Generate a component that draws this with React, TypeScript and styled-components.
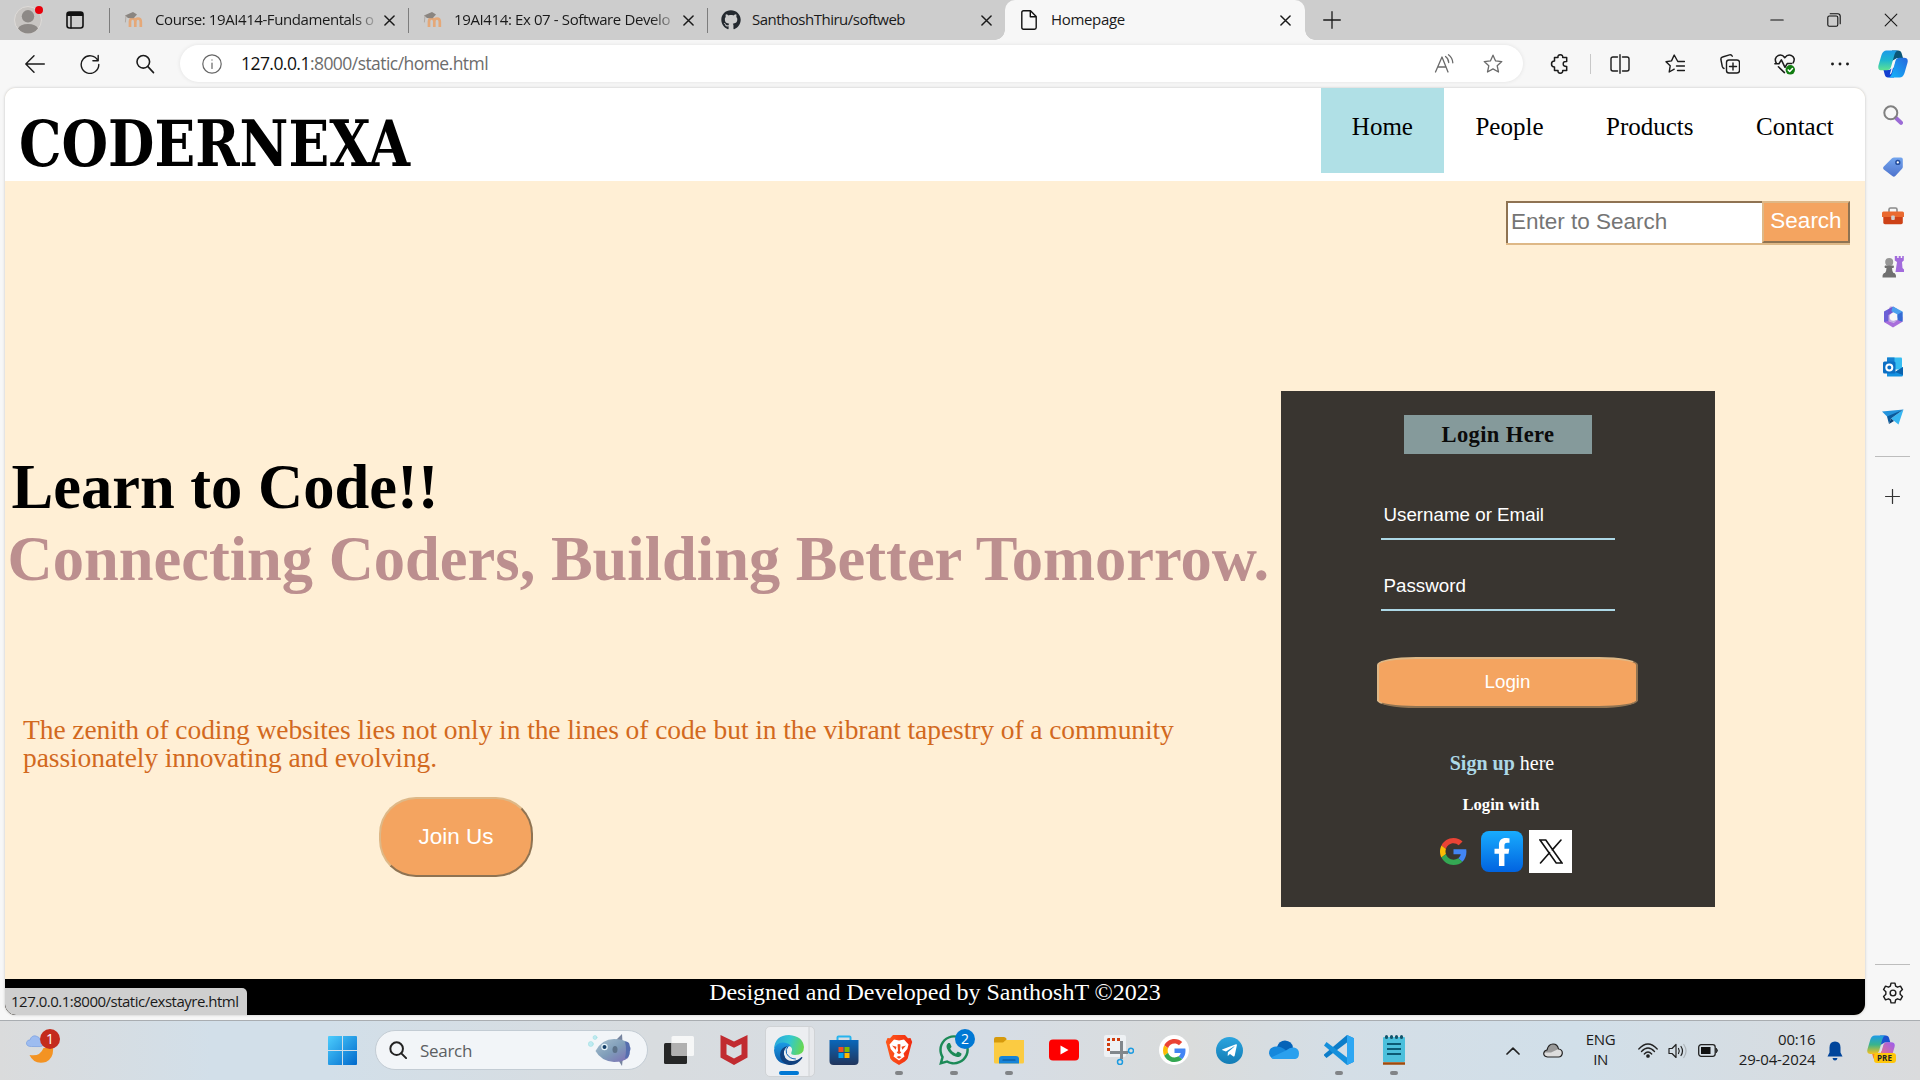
import React from "react";
import styled, { createGlobalStyle, css } from "styled-components";
import { FaGithub, FaWhatsapp, FaTelegramPlane, FaFacebookF } from "react-icons/fa";

const ui = `"Open Sans", "Noto Sans", sans-serif`;
const serif = `"Liberation Serif", "Times New Roman", serif`;
const sans = `"Liberation Sans", Arial, sans-serif`;

const GlobalStyle = createGlobalStyle`
  * { box-sizing: border-box; }
  body { margin: 0; background: #f7f7f7; overflow: hidden; }
`;

/* ---------- shared pieces ---------- */

const Screen = styled.div`
  width: 1920px;
  height: 1080px;
  display: flex;
  flex-direction: column;
  font-family: ${ui};
  color: #1a1a1a;
  overflow: hidden;
`;

const Icon = styled.svg<{ $w: number; $h?: number; $ml?: number }>`
  display: block;
  flex: none;
  width: ${(p) => p.$w}px;
  height: ${(p) => p.$h ?? p.$w}px;
  margin-left: ${(p) => p.$ml ?? 0}px;
  fill: none;
  stroke-linecap: round;
  stroke-linejoin: round;
`;

type LineProps = {
  w?: number;
  ml?: number;
  color?: string;
  sw?: number;
  children: React.ReactNode;
};

const Line = ({ w = 20, ml = 0, color = "#1b1b1b", sw = 1.4, children }: LineProps) => (
  <Icon viewBox="0 0 20 20" $w={w} $ml={ml} stroke={color} strokeWidth={sw}>
    {children}
  </Icon>
);

const GoogleMark = ({ size }: { size: number }) => (
  <Icon viewBox="0 0 48 48" $w={size}>
    <path fill="#ea4335" d="M24 9.500c3.540 0 6.710 1.220 9.210 3.600l6.850-6.850C35.900 2.380 30.470 0 24 0 14.620 0 6.510 5.380 2.560 13.220l7.980 6.190C12.430 13.720 17.740 9.500 24 9.500z" />
    <path fill="#4285f4" d="M46.980 24.550c0-1.570-.150-3.090-.380-4.550H24v9.020h12.940c-.580 2.960-2.260 5.480-4.780 7.180l7.730 6c4.510-4.180 7.090-10.360 7.090-17.650z" />
    <path fill="#fbbc05" d="M10.530 28.590c-.480-1.450-.760-2.990-.760-4.590s.270-3.140.760-4.590l-7.980-6.190C.920 16.460 0 20.120 0 24c0 3.880.920 7.540 2.560 10.780l7.970-6.190z" />
    <path fill="#34a853" d="M24 48c6.480 0 11.930-2.130 15.890-5.810l-7.730-6c-2.150 1.450-4.920 2.300-8.160 2.300-6.260 0-11.570-4.220-13.470-9.910l-7.980 6.190C6.510 42.620 14.620 48 24 48z" />
  </Icon>
);

/* ---------- tab strip ---------- */

const TabStrip = styled.div`
  height: 40px;
  flex: none;
  display: flex;
  align-items: center;
  background: #cdcdcd;
`;

const Avatar = styled.div`
  position: relative;
  width: 28px;
  height: 28px;
  margin-left: 14px;
`;

const AvatarDot = styled.i`
  position: absolute;
  top: 0;
  right: -1px;
  width: 8px;
  height: 8px;
  border-radius: 50%;
  background: #e8000b;
`;

const TabBox = styled.div<{ $active?: boolean; $first?: boolean; $w: number }>`
  width: ${(p) => p.$w}px;
  height: 40px;
  margin-left: ${(p) => (p.$first ? 25 : 0)}px;
  display: flex;
  align-items: center;
  ${(p) =>
    p.$active
      ? css`
          position: relative;
          background: #f7f7f7;
          border-radius: 10px 10px 0 0;
          &::before,
          &::after {
            content: "";
            position: absolute;
            bottom: 0;
            width: 10px;
            height: 10px;
          }
          &::before {
            left: -10px;
            background: radial-gradient(circle at 0 0, #cdcdcd 9.5px, #f7f7f7 10px);
          }
          &::after {
            right: -10px;
            background: radial-gradient(circle at 100% 0, #cdcdcd 9.5px, #f7f7f7 10px);
          }
        `
      : ""}
`;

const TabRule = styled.span`
  width: 1px;
  height: 25px;
  background: #7d7d7d;
`;

const Favicon = styled.span<{ $ml?: number }>`
  width: 20px;
  height: 20px;
  margin-left: ${(p) => p.$ml ?? 15}px;
  display: flex;
  align-items: center;
  justify-content: center;
  color: #24292f;
`;

const TabTitle = styled.span<{ $fade?: boolean; $ls?: number; $ml?: number }>`
  width: 219px;
  margin-left: ${(p) => p.$ml ?? 10}px;
  padding-bottom: 2px;
  white-space: nowrap;
  font-size: 15px;
  line-height: 20px;
  color: #1a1a1a;
  letter-spacing: ${(p) => p.$ls ?? 0}px;
  ${(p) => (p.$fade ? "mask-image: linear-gradient(90deg, #000 90%, transparent 103%);" : "")}
`;

const WindowButtons = styled.div`
  margin-left: auto;
  display: flex;
  align-items: center;
  gap: 43px;
  padding: 0 22px 1px 0;
`;

const Moodle = () => (
  <Icon viewBox="0 0 20 18" $w={20} $h={18}>
    <path d="M6 16V10.500Q6 7.500 8.600 7.500T11.300 10.500V16M11.300 10.500Q11.300 7.500 14 7.500T16.800 10.500V16" stroke="#e5a878" strokeWidth="2.700" strokeLinecap="butt" />
    <path d="M1 4.500L9 1l4 2.500-3.500 3.800L4 7z" fill="#8a8580" />
    <path d="M2 5l-.6 6" stroke="#a8a098" strokeWidth=".8" />
  </Icon>
);

const Cross = ({ size = 11, ml = 0, sw = 1.6 }) => (
  <Icon viewBox="0 0 12 12" $w={size} $ml={ml} stroke="#1a1a1a" strokeWidth={sw}>
    <path d="M1 1l10 10M11 1L1 11" />
  </Icon>
);

const Tabs = () => (
  <TabStrip>
    <Avatar>
      <Icon viewBox="0 0 28 28" $w={28}>
        <circle cx="14" cy="14" r="13.500" fill="#c8c5c2" stroke="#dedbd8" />
        <circle cx="14" cy="10.300" r="6.200" fill="#8d8986" />
        <path d="M4 22.500Q6 18 14 18T24 22.500Q20 27.600 14 27.600T4 22.500z" fill="#8d8986" />
      </Icon>
      <AvatarDot />
    </Avatar>
    <Icon viewBox="0 0 18 18" $w={18} $ml={24}>
      <rect x="1" y="1" width="16" height="16" rx="2.500" stroke="#111" strokeWidth="1.600" />
      <path d="M1 3.200Q1 1 3.200 1H15Q17 1 17 3.200V5H1z" fill="#111" />
      <path d="M5 5v12" stroke="#111" strokeWidth="1.400" />
    </Icon>
    <TabBox $w={299} $first>
      <TabRule />
      <Favicon $ml={14}><Moodle /></Favicon>
      <TabTitle $fade $ls={-0.42} $ml={11}>Course: 19AI414-Fundamentals o</TabTitle>
      <Cross ml={10} />
    </TabBox>
    <TabBox $w={299}>
      <TabRule />
      <Favicon $ml={14}><Moodle /></Favicon>
      <TabTitle $fade $ls={-0.38} $ml={11}>19AI414: Ex 07 - Software Develo</TabTitle>
      <Cross ml={10} />
    </TabBox>
    <TabBox $w={298}>
      <TabRule />
      <Favicon $ml={13}><FaGithub size={20} /></Favicon>
      <TabTitle $ls={-0.5} $ml={11}>SanthoshThiru/softweb</TabTitle>
      <Cross ml={10} />
    </TabBox>
    <TabBox $active $w={300}>
      <Favicon $ml={14}>
        <Icon viewBox="0 0 16 20" $w={16} $h={20} stroke="#111" strokeWidth="1.400">
          <path d="M2.500.8H9.500L15.200 6.600V17.500Q15.200 19.200 13.500 19.200H2.500Q.8 19.200.8 17.500V2.500Q.8.8 2.500.8zM9.300 1V6.800H15" />
        </Icon>
      </Favicon>
      <TabTitle $ls={-0.33} $ml={12}>Homepage</TabTitle>
      <Cross ml={10} />
    </TabBox>
    <Icon viewBox="0 0 18 18" $w={18} $ml={18} stroke="#1a1a1a" strokeWidth="1.300">
      <path d="M9 .7v16.600M.7 9h16.600" />
    </Icon>
    <WindowButtons>
      <Icon viewBox="0 0 14 14" $w={14} stroke="#111" strokeWidth="1.100"><path d="M.8 7h12.400" /></Icon>
      <Icon viewBox="0 0 14 14" $w={14} stroke="#111" strokeWidth="1.100">
        <rect x=".8" y="3" width="10" height="10.200" rx="1.500" />
        <path d="M3.200.8h7.500q2.500 0 2.500 2.500v7.500" />
      </Icon>
      <Cross size={14} sw={0.95} />
    </WindowButtons>
  </TabStrip>
);

/* ---------- address bar ---------- */

const Toolbar = styled.div`
  height: 47px;
  flex: none;
  display: flex;
  align-items: center;
  background: #f7f7f7;
`;

const AddressBar = styled.div`
  width: 1343px;
  height: 37px;
  margin-left: 25px;
  padding-right: 20px;
  display: flex;
  align-items: center;
  border-radius: 19px;
  background: #fff;
  box-shadow: 0 0 4px rgba(0, 0, 0, 0.09);
`;

const Url = styled.span`
  flex: 1;
  margin-left: 19px;
  padding-bottom: 1px;
  font-size: 17.5px;
  line-height: 24px;
  color: #6c6c6c;
  letter-spacing: -0.55px;
  b {
    font-weight: 400;
    color: #111;
  }
`;

const ToolRule = styled.span`
  width: 1px;
  height: 20px;
  margin-left: 20px;
  background: #c8c8c8;
`;

const starPath = "M10 1.200l2.600 5.700 6.200.7-4.600 4.200 1.300 6.200L10 14.900 4.500 18l1.300-6.200L1.200 7.600l6.200-.7z";

const Copilot = ({ w = 30, ml = 0, warm = false }) => (
  <Icon viewBox="0 0 30 28" $w={w} $h={(w * 28) / 30} $ml={ml}>
    <defs>
      <linearGradient id={`cpA${warm}`} x1="0" y1="0" x2="0" y2="1">
        <stop stopColor="#1d9ae8" />
        <stop offset=".5" stopColor={warm ? "#39b48c" : "#1fb7cf"} />
        <stop offset="1" stopColor={warm ? "#f8c21a" : "#5fe391"} />
      </linearGradient>
      <linearGradient id={`cpB${warm}`} x1="1" y1="0" x2="0" y2="1">
        <stop stopColor={warm ? "#9a5cf0" : "#2767dc"} />
        <stop offset="1" stopColor={warm ? "#ff7a6c" : "#12b7fb"} />
      </linearGradient>
    </defs>
    <path d="M14 .500h6q3 0 3.700 3L25 8h-6l-5 3z" fill={warm ? "#1b52cf" : "#0b5677"} />
    <path d="M16 27.500h-6q-2.600 0-3.300-3L5.500 20h5.500l6-3z" fill={warm ? "#f8822b" : "#123fd0"} />
    <path d="M8.500.500H20q-2.500.400-3.500 4l-3.500 12.500q-1 3.300-4 3.300H4q-4.700 0-3.500-5L3.500 5Q5 .500 8.500.500z" fill={`url(#cpA${warm})`} />
    <path d="M21.500 27.500H11q2-.500 3-4l3.400-12.500q1-3.200 4-3.200H26q4.700 0 3.500 5L26.500 23q-1.500 4.500-5 4.500z" fill={`url(#cpB${warm})`} />
    <path d="M17.500 9l-3.800 13.500q-.7 2-1.900 2L14 16.500z" fill={warm ? "#e4e6ee" : "#f7f7f7"} />
  </Icon>
);

const AddressRow = () => (
  <Toolbar>
    <Line ml={25}><path d="M.8 10h18.500M9 1.700L.8 10 9 18.300" /></Line>
    <Line ml={35}><path d="M17.800 6.500A8.800 8.800 0 1 0 18.800 10.500M18.200 1.500v5.300h-5.300" /></Line>
    <Line ml={35} sw={1.6}><circle cx="8.300" cy="7.800" r="6.300" /><path d="M12.900 12.600L18.500 18.600" /></Line>
    <AddressBar>
      <Line ml={22} color="#666" sw={1.2}>
        <circle cx="10" cy="10" r="9.200" /><path d="M10 9v5.500M10 5.900v.2" />
      </Line>
      <Url><b>127.0.0.1</b>:8000/static/home.html</Url>
      <Line color="#6a6a6a" sw={1.3}>
        <path d="M1.500 18L8 3l6 15M3.700 13h8.400M11.500 2.500q3 2 3.200 6M14.500.8q4 3 4.300 8" />
      </Line>
      <Line ml={29} color="#6a6a6a" sw={1.3}><path d={starPath} /></Line>
    </AddressBar>
    <Line ml={27} sw={1.5}>
      <path d="M4.500 3.500H8Q7.500.8 10.300.8T12.700 3.500h4v4q-3.500-.3-3.500 2.400t3.500 2.600v4h-4q.2 2.700-2.400 2.700T8 16.500H4.500V13Q1.500 13 1.500 10T4.500 7z" />
    </Line>
    <ToolRule />
    <Line ml={19}>
      <path d="M7.500 3H3Q1 3 1 5v10q0 2 2 2h4.500M12.500 3H17q2 0 2 2v10q0 2-2 2h-4.500M10 .8v18.400" />
    </Line>
    <Line ml={35}>
      <path d="M12.500 7L9.200 1 6.500 6.900 1 7.700l4.200 4.100L4.200 18l5-2.800M12.800 7.500h6.700M11.500 12h8M12.500 16.500h7" />
    </Line>
    <Line ml={35}>
      <rect x="6.500" y="6" width="13" height="13" rx="2.500" /><path d="M13 9v7M9.500 12.500h7M4 14.500Q2.700 14 2.300 12.500L.9 5.500Q.6 3.500 2.500 3L9.500.9q2-.4 2.800 1.300" />
    </Line>
    <Line ml={34} w={22}>
      <path d="M2.200 9.500Q-.5 4.500 4 2.200 7.500 1 9.800 4.300 12.300 1 15.600 2.200 20 4.500 17.400 9M.8 9.800h3.700L6.700 6.300 10 13l2-3.400h4M4 12.500l5.500 5.300" />
      <circle cx="14.800" cy="15.300" r="4.300" fill="#107c10" stroke="none" />
      <path d="M12.900 15.400l1.400 1.400 2.500-2.700" stroke="#fff" />
    </Line>
    <Line ml={34} sw={2.9}><path d="M2.500 10h.01M10 10h.01M17.500 10h.01" /></Line>
    <Copilot ml={28} />
  </Toolbar>
);

/* ---------- edge sidebar ---------- */

const Rail = styled.aside`
  width: 54px;
  padding-right: 1px;
  display: flex;
  flex-direction: column;
  align-items: center;
`;

const RailCell = styled.div<{ $h?: number }>`
  height: ${(p) => p.$h ?? 50}px;
  flex: none;
  display: flex;
  align-items: center;
`;

const RailRule = styled.hr<{ $mt?: string }>`
  width: 35px;
  height: 1px;
  border: 0;
  margin: ${(p) => p.$mt ?? "0"} 0 0;
  flex: none;
  background: #bdbdbd;
`;

const Sidebar = () => (
  <Rail>
    <RailCell $h={56}>
      <Icon viewBox="0 0 20 20" $w={20}>
        <path d="M13 13l5 4.800" stroke="#9b6bd6" strokeWidth="4" />
        <circle cx="7.800" cy="7.800" r="6.500" stroke="#808080" strokeWidth="2" />
      </Icon>
    </RailCell>
    <RailCell $h={47}>
      <Icon viewBox="0 0 20 20" $w={20}>
        <defs><linearGradient id="tag" x1="0" y1="0" x2="0" y2="1"><stop stopColor="#73a5ee" /><stop offset="1" stopColor="#4e73cd" /></linearGradient></defs>
        <path d="M11 .5h7q1.800 0 1.800 1.800V10q0 1-1 2l-6.500 7q-1.500 1.300-3 0L.8 12.500q-1.400-1.500 0-3L9 1.200Q10 .5 11 .5z" fill="url(#tag)" />
        <circle cx="14.800" cy="5.400" r="1.900" fill="#fff" stroke="#244d9d" strokeWidth="1.500" />
      </Icon>
    </RailCell>
    <RailCell $h={52}>
      <Icon viewBox="0 0 22 18" $w={22} $h={18}>
        <path d="M7 5V2.500Q7 1 8.500 1h5Q15 1 15 2.500V5" stroke="#8b8b8b" strokeWidth="1.600" />
        <path d="M1.500 4.500h19q1.500 0 1.500 1.500v4H0V6Q0 4.500 1.500 4.500z" fill="#ea6a30" />
        <path d="M1.300 10h19.500v5.500q0 1.700-1.700 1.700H3q-1.700 0-1.700-1.700z" fill="#cd4217" />
        <rect x="9.200" y="8.500" width="3.600" height="4.500" rx="1" fill="#cfcfcf" />
      </Icon>
    </RailCell>
    <RailCell>
      <Icon viewBox="0 0 22 22" $w={22}>
        <circle cx="7.200" cy="6" r="4" fill="#969696" />
        <path d="M3 9.500h8.500q1 1.300 0 2.500H10q0 3 1.500 5H3q1.500-2 1.500-5H3q-1-1.200 0-2.500zM2 17h10.500q2 1.500 1.500 4.500H.5Q0 18.500 2 17z" fill="#707070" />
        <path d="M12.800 0h2.400v2h1.500V0h2v2h1.500V0h1.600v4.500L20 6l.5 6 1.500 1.500V16h-8.500L15 6l-2.200-1.500z" fill="#a26bdc" />
      </Icon>
    </RailCell>
    <RailCell>
      <Icon viewBox="0 0 20 22" $w={20} $h={22}>
        <path d="M10 .5L1 5.500v10.300l4.500 2.200V9L15 3.500z" fill="#6b5fd6" />
        <path d="M10 .5l9.500 5v9l-5-3V8.500L8 5z" fill="#4aa0ee" />
        <path d="M19.500 10.500v5.200L10 21.500 1 16l4.500-1 5 2z" fill="#a86edb" />
        <path d="M14.500 8.500L19.500 5.700v10l-5-1.700z" fill="#356bd3" />
        <path d="M7 .5h2L8.500 12l6 2.500L10 17l-5-2.500V5z" fill="#7d4cc7" opacity=".45" />
        <circle cx="10.300" cy="11" r="3.700" fill="#f7f7f7" />
      </Icon>
    </RailCell>
    <RailCell>
      <Icon viewBox="0 0 20 20" $w={20}>
        <rect x="4" y=".5" width="15" height="12" rx="1" fill="#36bdf2" />
        <path d="M4 .5h7.500v8H4z" fill="#1680d0" />
        <path d="M4 19.500V11l8 4 8-5v8q0 1.500-1.500 1.500z" fill="#1491e0" />
        <path d="M12 15l8-5v8z" fill="#0a62ad" />
        <rect y="4.500" width="12.500" height="12" rx="1.500" fill="#0c6fc4" />
        <circle cx="6.300" cy="10.500" r="3" stroke="#fff" strokeWidth="2" />
      </Icon>
    </RailCell>
    <RailCell>
      <Icon viewBox="0 0 22 16" $w={22} $h={16}>
        <path d="M0 2.500L21.500.5 6 8.500z" fill="#2393dc" />
        <path d="M21.500.5L16.500 15.500 9 9.500z" fill="#36b6f2" />
        <path d="M5 7.500L21.500.5 9 9.500 7 15z" fill="#0a5a9c" />
        <path d="M9 9.500l3 2.500L7 15z" fill="#0b3f75" />
      </Icon>
    </RailCell>
    <RailRule $mt="14px" />
    <RailCell $h={78}>
      <Icon viewBox="0 0 16 16" $w={15} stroke="#333" strokeWidth="1.300"><path d="M8 .6v14.800M.6 8h14.800" /></Icon>
    </RailCell>
    <RailRule $mt="auto" />
    <RailCell $h={55}>
      <Line w={22} sw={1.3}>
        <path d="M8.200 1h3.600l.6 2.700 1.700 1 2.700-.9 1.800 3.100-2.100 1.900v2.400l2.100 1.900-1.800 3.100-2.700-.9-1.700 1-.6 2.700H8.200l-.6-2.700-1.700-1-2.700.9-1.800-3.100 2.100-1.900V8.800L1.400 6.900l1.800-3.100 2.700.9 1.700-1z" />
        <circle cx="10" cy="10" r="2.600" />
      </Line>
    </RailCell>
  </Rail>
);

/* ---------- web page ---------- */

const Middle = styled.div`
  height: 933px;
  flex: none;
  display: flex;
  justify-content: space-between;
  background: #f7f7f7;
`;

const Page = styled.div`
  position: relative;
  width: 1860px;
  height: 927px;
  margin: 1px 0 0 5px;
  display: flex;
  flex-direction: column;
  border-radius: 11px;
  overflow: hidden;
  background: #ffefd5;
  box-shadow: 0 0 3px rgba(0, 0, 0, 0.22);
  font-family: ${serif};
`;

const Header = styled.header`
  height: 93px;
  flex: none;
  display: flex;
  justify-content: space-between;
  background: #fff;
`;

const Brand = styled.h1`
  margin: 26px 0 0 14px;
  font: 700 63px/60px "DejaVu Serif Condensed", "DejaVu Serif", serif;
  font-stretch: condensed;
  color: #000;
  transform: scaleX(0.943);
  transform-origin: 0 0;
`;

const Nav = styled.nav`
  display: flex;
`;

const NavLink = styled.a<{ $active?: boolean }>`
  height: 85px;
  padding: 25px 31.25px 0;
  font-size: 25px;
  line-height: 28px;
  color: #000;
  background: ${(p) => (p.$active ? "#b0e0e6" : "transparent")};
`;

const Main = styled.main`
  flex: 1;
  display: flex;
  flex-direction: column;
`;

const SearchForm = styled.form`
  align-self: flex-end;
  width: 344px;
  height: 44px;
  margin: 20px 15px 0 0;
  display: flex;
  border-bottom: 2px solid #deb887;
`;

const SearchInput = styled.input`
  width: 256px;
  height: 42px;
  padding: 0 0 2px 3px;
  border: solid #8f7352;
  border-width: 2px 0 0 2px;
  background: #fff;
  font: 22.5px ${sans};
  outline: 0;
  &::placeholder {
    color: #757575;
    opacity: 1;
  }
`;

const orangeButton = css`
  padding: 0;
  border: 2px solid;
  border-color: #deb887 #8f7352 #8f7352 #deb887;
  background: #f4a460;
  color: #fff;
  font-family: ${sans};
`;

const SearchButton = styled.button`
  ${orangeButton}
  width: 88px;
  height: 42px;
  padding-bottom: 2px;
  font-size: 22.5px;
`;

const Columns = styled.div`
  display: flex;
`;

const Intro = styled.section`
  width: 1276px;
  padding-top: 206px;
`;

const Slogan = styled.h2<{ $color: string; $pl: number }>`
  margin: 0;
  padding-left: ${(p) => p.$pl}px;
  font-size: 62.5px;
  line-height: 72px;
  white-space: nowrap;
  color: ${(p) => p.$color};
`;

const Blurb = styled.p`
  margin: 121px 0 0 18px;
  font-size: 27.5px;
  line-height: 28px;
  letter-spacing: -0.08px;
  white-space: nowrap;
  color: #d2691e;
`;

const JoinButton = styled.button`
  ${orangeButton}
  width: 154px;
  height: 80px;
  margin: 25px 0 0 374px;
  border-radius: 37px;
  font-size: 22.5px;
  padding-bottom: 1px;
`;

const LoginCard = styled.section`
  width: 434px;
  height: 516px;
  margin-top: 146px;
  display: flex;
  flex-direction: column;
  align-items: center;
  background: #393530;
`;

const LoginTitle = styled.h3`
  width: 188px;
  height: 39px;
  margin: 24px 0 0;
  text-align: center;
  font-size: 22.5px;
  line-height: 40px;
  letter-spacing: 0.4px;
  color: #0b0b0b;
  background: #859a9b;
`;

const Field = styled.input<{ $mt: number }>`
  width: 234px;
  height: 37px;
  margin-top: ${(p) => p.$mt}px;
  padding: 0 0 12px 2.5px;
  border: 0;
  border-bottom: 2px solid #add8e6;
  border-radius: 0;
  background: transparent;
  font: 18.75px/22px ${sans};
  &::placeholder {
    color: #fff;
    opacity: 1;
  }
`;

const LoginButton = styled.button`
  ${orangeButton}
  width: 261px;
  height: 51px;
  margin: 46px 0 0 19px;
  padding-bottom: 2px;
  border-radius: 15%;
  font-size: 18.75px;
`;

const SignUp = styled.p`
  margin: 44px 0 0 8px;
  font-size: 20px;
  line-height: 23px;
  color: #fff;
  b {
    color: #add8e6;
  }
`;

const LoginWith = styled.h5`
  margin: 20px 0 0 6px;
  font-size: 16.6px;
  line-height: 19px;
  color: #fff;
`;

const Socials = styled.div`
  display: flex;
  align-items: center;
  margin: 16px 0 0 14px;
`;

const Social = styled.span<{ $kind: "plain" | "blue" | "white" }>`
  width: ${(p) => (p.$kind === "plain" ? 30 : p.$kind === "blue" ? 42 : 43)}px;
  height: ${(p) => (p.$kind === "white" ? 43 : 41)}px;
  margin-left: ${(p) => (p.$kind === "plain" ? 0 : p.$kind === "blue" ? 13 : 6)}px;
  display: flex;
  align-items: center;
  justify-content: center;
  border-radius: ${(p) => (p.$kind === "blue" ? 8 : 0)}px;
  background: ${(p) =>
    p.$kind === "plain" ? "none" : p.$kind === "white" ? "#fff" : "linear-gradient(#18acfe, #0163e0)"};
  color: ${(p) => (p.$kind === "blue" ? "#fff" : "#111")};
`;

const Footer = styled.footer`
  height: 36px;
  flex: none;
  text-align: center;
  font-size: 24px;
  line-height: 27px;
  color: #fff;
  background: #000;
`;

const StatusBubble = styled.div`
  position: absolute;
  left: 0;
  bottom: 0;
  width: 242px;
  height: 27px;
  padding-left: 6px;
  border-radius: 0 5px 0 11px;
  background: #cfcfcf;
  color: #1a1a1a;
  font: 15px/26px ${ui};
  letter-spacing: -0.5px;
  white-space: nowrap;
`;

const WebPage = () => (
  <Page>
    <Header>
      <Brand>CODERNEXA</Brand>
      <Nav>
        <NavLink $active>Home</NavLink>
        <NavLink>People</NavLink>
        <NavLink>Products</NavLink>
        <NavLink>Contact</NavLink>
      </Nav>
    </Header>
    <Main>
      <SearchForm>
        <SearchInput placeholder="Enter to Search" />
        <SearchButton type="button">Search</SearchButton>
      </SearchForm>
      <Columns>
        <Intro>
          <Slogan $color="#000" $pl={6.5}>Learn to Code!!</Slogan>
          <Slogan $color="#bc8f8f" $pl={2.5}>Connecting Coders, Building Better Tomorrow.</Slogan>
          <Blurb>
            The zenith of coding websites lies not only in the lines of code but in the vibrant tapestry of a community
            <br />
            passionately innovating and evolving.
          </Blurb>
          <JoinButton>Join Us</JoinButton>
        </Intro>
        <LoginCard>
          <LoginTitle>Login Here</LoginTitle>
          <Field $mt={49} placeholder="Username or Email" />
          <Field $mt={34} placeholder="Password" />
          <LoginButton>Login</LoginButton>
          <SignUp><b>Sign up</b> here</SignUp>
          <LoginWith>Login with</LoginWith>
          <Socials>
            <Social $kind="plain"><GoogleMark size={27} /></Social>
            <Social $kind="blue"><FaFacebookF size={28} /></Social>
            <Social $kind="white">
              <Icon viewBox="0 0 24 25" $w={24} $h={25} stroke="#111" strokeWidth="1.600">
                <path d="M1 1h5.800l16.200 23h-5.800zM22 1l-8.700 9.900M1.500 24l9-10.300" strokeLinejoin="miter" />
              </Icon>
            </Social>
          </Socials>
        </LoginCard>
      </Columns>
    </Main>
    <Footer>Designed and Developed by SanthoshT ©2023</Footer>
    <StatusBubble>127.0.0.1:8000/static/exstayre.html</StatusBubble>
  </Page>
);

/* ---------- taskbar ---------- */

const Taskbar = styled.div`
  height: 60px;
  flex: none;
  display: flex;
  align-items: center;
  border-top: 1px solid #a9adb1;
  background: linear-gradient(90deg, #dadbdc 0, #d2dfe9 11%, #d2dfe9 17%, #d8dcdf 34%, #d6dde5 52%, #dadcdc 62%, #d4dee6 70%, #d1dfe9 82%, #dadbdd 100%);
`;

const Weather = styled.div`
  position: relative;
  width: 34px;
  height: 34px;
  margin: 0 0 8px 26px;
`;

const Count = styled.span<{ $bg: string; $x: number; $y: number }>`
  position: absolute;
  left: ${(p) => p.$x}px;
  top: ${(p) => p.$y}px;
  width: 20px;
  height: 20px;
  border-radius: 50%;
  text-align: center;
  font-size: 14px;
  line-height: 20px;
  color: #fff;
  background: ${(p) => p.$bg};
`;

const SearchPill = styled.div`
  width: 273px;
  height: 40px;
  margin: 0 0 1px 18px;
  padding: 0 16px 0 13px;
  display: flex;
  align-items: center;
  border-radius: 20px;
  border: 1px solid #c3ccd4;
  background: #f2f5f8;
  font-size: 17px;
  letter-spacing: -0.3px;
  color: #5c5f62;
  span {
    flex: 1;
    margin-left: 13px;
  }
`;

const Apps = styled.div`
  display: flex;
  margin-left: 3.5px;
`;

const AppCell = styled.div<{ $run?: boolean; $active?: boolean }>`
  position: relative;
  width: 55px;
  height: 59px;
  padding-bottom: 1px;
  display: flex;
  align-items: center;
  justify-content: center;
  ${(p) =>
    p.$active
      ? css`
          &::before {
            content: "";
            position: absolute;
            left: 3px;
            top: 5px;
            width: 48px;
            height: 49px;
            border-radius: 5px;
            border: 1px solid #d0d3d6;
            background: linear-gradient(90deg, #eceef1 42px, #cfd2d5 43px, #e7e9ec 44px);
          }
        `
      : ""}
  ${(p) =>
    p.$run || p.$active
      ? css`
          &::after {
            content: "";
            position: absolute;
            bottom: 5px;
            left: ${p.$active ? 17.5 : 23.5}px;
            width: ${p.$active ? 20 : 8}px;
            height: 4px;
            border-radius: 2px;
            background: ${p.$active ? "#0078d4" : "#818487"};
          }
        `
      : ""}
  svg {
    position: relative;
  }
`;

const Disc = styled.span<{ $bg: string; $s: number }>`
  width: ${(p) => p.$s}px;
  height: ${(p) => p.$s}px;
  border-radius: 50%;
  display: flex;
  align-items: center;
  justify-content: center;
  background: ${(p) => p.$bg};
`;

const TrayText = styled.div<{ $align: string; $w: number; $ml: number; $ls?: number }>`
  width: ${(p) => p.$w}px;
  margin-left: ${(p) => p.$ml}px;
  padding-bottom: 4px;
  text-align: ${(p) => p.$align};
  font-size: 15px;
  line-height: 20px;
  letter-spacing: ${(p) => p.$ls ?? -0.4}px;
  white-space: nowrap;
  color: #1c1c1c;
`;

const Tray = styled.div`
  display: flex;
  align-items: center;
  margin-left: 84px;
`;

const PreWrap = styled.div`
  position: relative;
  margin: 0 0 4px 23.5px;
`;

const Pre = styled.span`
  position: absolute;
  left: 7px;
  top: 18px;
  width: 22px;
  height: 10px;
  border-radius: 3px;
  text-align: center;
  font: 700 8px/10px ${ui};
  color: #222;
  background: #ffc60a;
`;

const app32 = { viewBox: "0 0 30 30", $w: 30 };

const BottomBar = () => (
  <Taskbar>
    <Weather>
      <Icon viewBox="0 0 34 34" $w={34}>
        <path d="M3.500 25Q14 27 17.500 18L27 17.500Q28 28 20 32 8 35 3.500 25z" fill="#f39323" />
        <path d="M5 16.500Q0 16.500.5 12.500 1.500 9.500 4 10 5.500 5 10 6q4 1 4 4 4 0 4 3t-3 3.500z" fill="#9dbcf0" stroke="#7fa3e2" strokeWidth=".8" />
      </Icon>
      <Count $bg="#c42b1c" $x={14} $y={-1}>1</Count>
    </Weather>
    <Icon viewBox="0 0 29 29" $w={29} $ml={268}>
      <defs><linearGradient id="win" x1="0" y1="0" x2="1" y2="1"><stop stopColor="#4ccdfd" /><stop offset="1" stopColor="#0069cc" /></linearGradient></defs>
      <path d="M1 0h13v14H0V1Q0 0 1 0zM15 0h13q1 0 1 1v13H15zM0 15h14v14H1q-1 0-1-1zM15 15h14v13q0 1-1 1H15z" fill="url(#win)" />
    </Icon>
    <SearchPill>
      <Line w={18} color="#222" sw={2.2}><circle cx="8.500" cy="8.500" r="7" /><path d="M13.700 13.700L19 19" /></Line>
      <span>Search</span>
      <Icon viewBox="0 0 43 32" $w={43} $h={32}>
        <defs><linearGradient id="fish" x1="0" y1="0" x2="1" y2="1"><stop stopColor="#a9c1cf" /><stop offset=".5" stopColor="#7f9db9" /><stop offset="1" stopColor="#7c6bb5" /></linearGradient></defs>
        <path d="M27 7L34 0l.5 8zM29 24l5 8 1-9z" fill="#76849f" />
        <path d="M7.500 17Q14 5 26 5q8 0 13 3 3 2 3 7t-2 9q-5 4-14 4Q13 27 7.500 17z" fill="url(#fish)" />
        <path d="M37 7.500q5 0 4.500 4.500 2 2.500 0 5.500.5 6-4.500 7 2-9 0-17z" fill="#566eae" />
        <ellipse cx="27" cy="15.500" rx="2.500" ry="3.500" fill="#5c7289" />
        <circle cx="16.500" cy="13" r="3.200" fill="#e8f6fb" /><circle cx="16.500" cy="13" r="2" fill="#143e67" />
        <circle cx="2.800" cy="10" r="2.500" fill="#bfeaf2" stroke="#9dd" strokeWidth=".5" />
        <circle cx="7" cy="3.500" r="2" fill="#bfeaf2" stroke="#9dd" strokeWidth=".5" />
      </Icon>
    </SearchPill>
    <Apps>
      <AppCell>
        <Icon {...app32}>
          <rect y="8" width="23" height="21" rx="1.500" fill="#262727" />
          <rect x="7.500" y="1" width="22.500" height="20" rx="1.500" fill="#f9f9f9" opacity=".92" />
          <path d="M7.500 8H23v13H9q-1.500 0-1.500-1.500z" fill="#b0b0b0" />
        </Icon>
      </AppCell>
      <AppCell>
        <Icon {...app32}>
          <path d="M1.500 0L15 6.500 28.500 0V22.500L15 30 1.500 22.500zM7.500 9v10.500L15 23.500l7.500-4V9L15 12.800z" fill="#c12b30" fillRule="evenodd" />
        </Icon>
      </AppCell>
      <AppCell $active>
        <Icon {...app32}>
          <defs>
            <linearGradient id="e1" x1="0" y1=".3" x2="1" y2=".5"><stop stopColor="#2aa6dc" /><stop offset=".5" stopColor="#32c8d0" /><stop offset="1" stopColor="#68d84f" /></linearGradient>
            <linearGradient id="e2" x1="0" y1="0" x2="0" y2="1"><stop stopColor="#1b9be4" /><stop offset="1" stopColor="#0b58a8" /></linearGradient>
          </defs>
          <path d="M0 14Q1 0 15 0 29 1 30 12 30 20 21 20q-5 0-3.500-3 2-4-2.500-6.500Q6 6 0 14z" fill="url(#e1)" />
          <path d="M0 15Q2 7 9.500 7.500q6 .5 7.500 4-5-1-7 4.500-1 7 5.500 13.500Q1 29.500 0 15z" fill="url(#e2)" />
          <path d="M14 11q-5 3-4 9 2 6.500 9 6 5-.5 8.500-4 1.500-.500.500 1.500Q23 30.500 15 30 6 28 6 19.500 6.500 12 14 11z" fill="#11417f" />
          <path d="M14 11.500q-3 3-1.500 7 3 5.500 9 5.500" stroke="#0d65b8" strokeWidth="1" />
        </Icon>
      </AppCell>
      <AppCell>
        <Icon {...app32}>
          <defs><linearGradient id="store" x1="0" y1="0" x2="0" y2="1"><stop stopColor="#0a67ba" /><stop offset="1" stopColor="#21355c" /></linearGradient></defs>
          <path d="M8.500 6V2.500q0-1 1-1h11q1 0 1 1V6" stroke="#27b4ee" strokeWidth="2" />
          <path d="M.5 5h29v21q0 4-4 4h-21q-4 0-4-4z" fill="url(#store)" />
          <path d="M9.500 12h5v5h-5z" fill="#f25022" /><path d="M15.500 12h5v5h-5z" fill="#7fba00" />
          <path d="M9.500 18h5v5h-5z" fill="#00a4ef" /><path d="M15.500 18h5v5h-5z" fill="#ffb900" />
        </Icon>
      </AppCell>
      <AppCell $run>
        <Icon {...app32}>
          <defs><linearGradient id="brave" x1="0" y1="0" x2="1" y2="0"><stop stopColor="#ff5a1c" /><stop offset="1" stopColor="#f02a10" /></linearGradient></defs>
          <path d="M9 0h12l3 3.200 2.500-.2 1.700 4-1 3-3.500 13.500Q22.500 26 15 30 7.500 26 6.300 23.500L2.800 10l-1-3L3.500 3 6 3.200z" fill="url(#brave)" />
          <path d="M10 4.500l5 1 5-1 4.500 5-1.200 4.500-3.800 4.500 1 3-5.500 4-5.500-4 1-3L6.700 14 5.500 9.500z" fill="#fff" />
          <path d="M8 10.500l4.500 1.200-.8 3zM22 10.500l-4.500 1.200.8 3zM13.500 9.500l1.500-.5 1.500.5-.5 6.500 1.300 1.800-2.300 1.200-2.300-1.200 1.300-1.800zM12.500 22l2.500-1 2.500 1-2.500 1.800z" fill="#f24a1d" />
        </Icon>
      </AppCell>
      <AppCell $run>
        <FaWhatsapp size={34} color="#1c8a57" />
        <Count $bg="#0078d4" $x={28.5} $y={8}>2</Count>
      </AppCell>
      <AppCell $run>
        <Icon {...app32}>
          <path d="M0 4q0-2 2-2h8q2 0 3 2.500h-1V9H0z" fill="#d69a0c" />
          <path d="M0 7.500h9L12 5h18v22q0 1.500-1.500 1.500h-27Q0 28.500 0 27z" fill="#fbcb42" />
          <path d="M5 28.500V24q0-3 3-3h14q3 0 3 3v4.500z" fill="#1784d8" /><path d="M9 25h12" stroke="#0b4f8c" strokeWidth="1.200" />
        </Icon>
      </AppCell>
      <AppCell>
        <Icon {...app32}>
          <rect y="4.500" width="30" height="21" rx="4" fill="#fe0000" /><path d="M11.500 10.500l8 4.500-8 4.500z" fill="#fff" />
        </Icon>
      </AppCell>
      <AppCell>
        <Icon {...app32}>
          <rect width="22" height="22" rx="2" fill="#eef1f4" />
          <path d="M4.500 16V4.500H16" stroke="#cf3b0c" strokeWidth="3" strokeDasharray="3 2" strokeLinecap="butt" />
          <path d="M17.500 6v18M6 17.500h18" stroke="#81878c" strokeWidth="3" strokeLinecap="butt" />
          <circle cx="27" cy="15.800" r="2.500" stroke="#1c9be0" strokeWidth="1.500" /><circle cx="16" cy="27" r="2.500" stroke="#1c9be0" strokeWidth="1.500" />
        </Icon>
      </AppCell>
      <AppCell><Disc $bg="#fff" $s={30}><GoogleMark size={23} /></Disc></AppCell>
      <AppCell><Disc $bg="linear-gradient(#2ca5df,#137cb5)" $s={27}><FaTelegramPlane size={17} color="#fff" /></Disc></AppCell>
      <AppCell>
        <Icon {...app32}>
          <path d="M8 12Q10 5.500 16 5.500q7 .5 8 7L17 19z" fill="#0563b8" />
          <path d="M0 18.500Q0 12 7 11.500q5-.5 10 4L27 24H6q-5 0-6-5.500z" fill="#1688dc" />
          <path d="M17 15.500q4-3.500 8-3 5 1 5 6 0 5.500-5 5.500H6q-3 0-4-1.500z" fill="#2aa0ee" />
        </Icon>
      </AppCell>
      <AppCell $run>
        <Icon {...app32}>
          <path d="M23 0l7 3.200v23.600L23 30V7.500L2.500 23 0 20.500v-1z" fill="#0c7dc9" />
          <path d="M0 10.500L2.500 7 23 22.500V30L0 10.500z" fill="#1590dc" />
          <path d="M23 0l7 3.200v23.600L23 30z" fill="#2ea7f3" />
        </Icon>
      </AppCell>
      <AppCell $run>
        <Icon {...app32}>
          <rect x="4" y="2" width="22" height="25" rx="1" fill="#4cc0dc" /><path d="M4 28.500h22" stroke="#a14b0c" strokeWidth="2.500" strokeLinecap="butt" />
          <path d="M8 9h14M8 14h14M8 19h14" stroke="#0c5a74" strokeWidth="1.800" strokeLinecap="butt" />
          <path d="M7.500 1.500v1M12.500 1.500v1M17.500 1.500v1M22.500 1.500v1" stroke="#14546b" strokeWidth="3" />
        </Icon>
      </AppCell>
    </Apps>
    <Tray>
      <Icon viewBox="0 0 14 8" $w={14} $h={8} stroke="#222" strokeWidth="1.700"><path d="M1 7l6-5.800L13 7" /></Icon>
      <Icon viewBox="0 0 20 15" $w={20} $h={15} $ml={23}>
        <path d="M4.500 14Q.7 13.500.7 10.500 1 7.500 4 7 5.500 1 10 1q4.500 0 5.500 5 4 .5 3.800 4.300-.5 3.500-3.800 3.700z" fill="#ddd" />
        <path d="M1 9.500Q1.300 7.200 4 7 5.500 1 10 1q4.500 0 5.500 5L8 9.500z" fill="#999" />
        <path d="M4.500 14Q.7 13.500.7 10.500 1 7.500 4 7 5.500 1 10 1q4.500 0 5.500 5 4 .5 3.800 4.300-.5 3.500-3.800 3.700z" stroke="#222" strokeWidth="1.200" />
      </Icon>
      <TrayText $align="center" $w={36} $ml={20}>ENG<br />IN</TrayText>
      <Icon viewBox="0 0 20 15" $w={20} $h={15} $ml={19} stroke="#222" strokeWidth="1.300">
        <path d="M.8 6Q10-4 19.200 6M3.500 8.500Q10 1.500 16.500 8.500M6.300 11Q10 7 13.700 11" /><circle cx="10" cy="13" r="1.200" fill="#222" />
      </Icon>
      <Icon viewBox="0 0 20 16" $w={20} $h={16} $ml={10} stroke="#222" strokeWidth="1.200">
        <path d="M1 5.500h3L8 1.500v13L4 10.500H1zM10.500 5.500q1.500 2.500 0 5M13 3.500q3 4.500 0 9" /><path d="M15.800 1.500q4.500 6.500 0 13" stroke="#aeb4b9" />
      </Icon>
      <Icon viewBox="0 0 20 13" $w={20} $h={13} $ml={10}>
        <rect x=".7" y=".7" width="16.500" height="11.600" rx="2.500" stroke="#222" strokeWidth="1.300" /><rect x="3" y="3" width="9.500" height="7" fill="#111" /><path d="M18.500 4.500q2 2 0 4z" fill="#222" stroke="#222" />
      </Icon>
      <TrayText $align="right" $w={85} $ml={13} $ls={-0.15}>00:16<br />29-04-2024</TrayText>
      <Icon viewBox="0 0 16 20" $w={16} $h={20} $ml={11.5}>
        <path d="M8 .5q5.500 0 5.500 6v5l2 4H.5l2-4v-5q0-6 5.500-6zM5.500 17h5q-.5 2.500-2.500 2.500T5.500 17z" fill="#00459b" />
      </Icon>
      <PreWrap><Copilot w={28} warm /><Pre>PRE</Pre></PreWrap>
    </Tray>
  </Taskbar>
);

export default function App() {
  return (
    <Screen>
      <GlobalStyle />
      <Tabs />
      <AddressRow />
      <Middle>
        <WebPage />
        <Sidebar />
      </Middle>
      <BottomBar />
    </Screen>
  );
}
